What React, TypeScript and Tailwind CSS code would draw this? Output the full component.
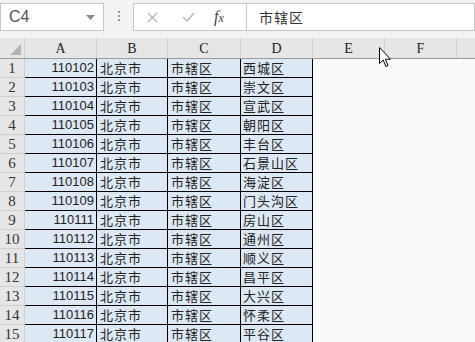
const rows = [
  ["110102", "西城区"],
  ["110103", "崇文区"],
  ["110104", "宣武区"],
  ["110105", "朝阳区"],
  ["110106", "丰台区"],
  ["110107", "石景山区"],
  ["110108", "海淀区"],
  ["110109", "门头沟区"],
  ["110111", "房山区"],
  ["110112", "通州区"],
  ["110113", "顺义区"],
  ["110114", "昌平区"],
  ["110115", "大兴区"],
  ["110116", "怀柔区"],
  ["110117", "平谷区"],
];

const cols = [
  { label: "A", w: "w-[72px]" },
  { label: "B", w: "w-[71px]" },
  { label: "C", w: "w-[73px]" },
  { label: "D", w: "w-[72px]" },
  { label: "E", w: "w-[72px]" },
  { label: "F", w: "w-[72px]" },
];

const cjk = "font-['Noto_Sans_CJK_SC',sans-serif]";
const serif = "font-['Liberation_Serif',serif]";

function Cursor() {
  return (
    <svg
      className="absolute left-[379px] top-[47px]"
      width="13"
      height="21"
      viewBox="0 0 13 21"
    >
      <path
        d="M0.5 0.5 L0.5 16.5 L4.2 13 L6.8 19.5 L9 18.6 L6.4 12.2 L11.5 12.2 Z"
        fill="#fff"
        stroke="#000"
        strokeWidth="1"
        strokeLinejoin="miter"
      />
    </svg>
  );
}

export default function App() {
  return (
    <div className="relative h-[342px] w-[475px] overflow-hidden bg-[#f3f3f3] font-['Liberation_Sans',sans-serif]">
      {/* formula bar */}
      <div className="flex h-[38px] items-start pt-[3px]">
        <div className="flex h-[28px] w-[104px] items-center justify-between border border-[#c6c6c6] bg-white pl-[8px] pr-[8px]">
          <span className="text-[16px] font-light text-[#555]">C4</span>
          <svg width="9" height="5" viewBox="0 0 9 5">
            <path d="M0 0 L9 0 L4.5 5 Z" fill="#888" />
          </svg>
        </div>
        <div className="flex w-[29px] flex-col items-center gap-[2px] pt-[8px]">
          <span className="h-[2px] w-[2px] bg-[#999]" />
          <span className="h-[2px] w-[2px] bg-[#999]" />
          <span className="h-[2px] w-[2px] bg-[#999]" />
        </div>
        <div className="flex h-[28px] w-[114px] items-center border border-[#c6c6c6] bg-white">
          <svg className="ml-[13px]" width="11" height="11" viewBox="0 0 11 11">
            <path d="M1 1 L10 10 M10 1 L1 10" stroke="#b5b5b5" strokeWidth="1.3" />
          </svg>
          <svg className="ml-[24px]" width="13" height="10" viewBox="0 0 13 10">
            <path d="M1 5 L5 9 L12 1" stroke="#b5b5b5" strokeWidth="1.5" fill="none" />
          </svg>
          <span className={`${serif} ml-[19px] text-[16px] italic text-[#444]`}>
            f<span className="text-[12px]">x</span>
          </span>
        </div>
        <div className="flex h-[28px] flex-1 items-center border border-l-0 border-[#c6c6c6] bg-white pl-[12px]">
          <span className={`${cjk} text-[14px] tracking-[1px] text-[#333]`}>市辖区</span>
        </div>
      </div>

      {/* sheet */}
      <div className="flex h-[21px] border-b border-[#9c9c9c] bg-[#e6e6e6]">
        <div className="flex w-[25px] items-end justify-end border-r border-[#cfcfcf] pb-[3px] pr-[3px]">
          <svg width="11" height="11" viewBox="0 0 11 11">
            <path d="M11 0 L11 11 L0 11 Z" fill="#b4b4b4" />
          </svg>
        </div>
        {cols.map((c) => (
          <div
            key={c.label}
            className={`${c.w} ${serif} flex shrink-0 items-center justify-center border-r border-[#cfcfcf] text-[14px] text-[#222]`}
          >
            {c.label}
          </div>
        ))}
        <div className="flex-1" />
      </div>

      <div className="bg-[#fafafa]">
        {rows.map(([code, dist], i) => (
          <div key={code} className="flex h-[19px]">
            <div
              className={`${serif} flex w-[25px] shrink-0 items-center justify-center border-r border-b border-[#cfcfcf] bg-[#e6e6e6] text-[15px] text-[#333]`}
            >
              {i + 1}
            </div>
            <div className="flex w-[72px] shrink-0 items-center justify-end border-r border-b border-black bg-[#dde8f5] pr-[2px] text-[13px] text-[#222]">
              {code}
            </div>
            <div className={`${cjk} flex w-[71px] shrink-0 items-center border-r border-b border-black bg-[#dde8f5] pl-[3px] text-[13px] tracking-[1px] text-[#222]`}>
              北京市
            </div>
            <div className={`${cjk} flex w-[73px] shrink-0 items-center border-r border-b border-black bg-[#dde8f5] pl-[3px] text-[13px] tracking-[1px] text-[#222]`}>
              市辖区
            </div>
            <div className={`${cjk} flex w-[72px] shrink-0 items-center border-r border-b border-black bg-[#dde8f5] pl-[2px] text-[13px] tracking-[1px] text-[#222]`}>
              {dist}
            </div>
            <div className="flex-1" />
          </div>
        ))}
      </div>

      <Cursor />
    </div>
  );
}
